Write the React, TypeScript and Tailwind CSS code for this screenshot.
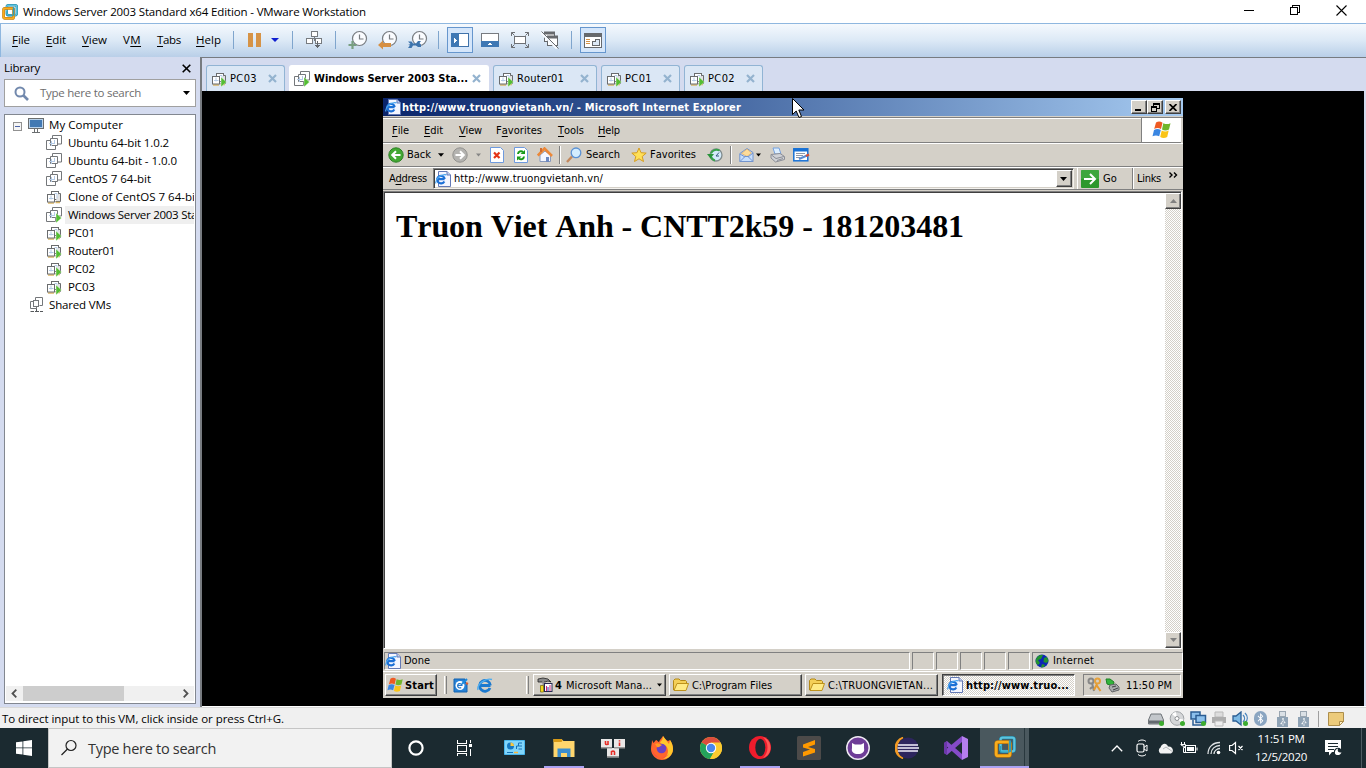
import React, { useLayoutEffect, useRef, useState } from "react";
import { FaBluetoothB, FaUsb } from "react-icons/fa";

const SEG = "font-['Open_Sans','Noto_Sans',sans-serif]";
const TAH = "font-['DejaVu_Sans_Condensed','DejaVu_Sans',sans-serif] [font-stretch:condensed] [font-kerning:none]";

/* One-line label whose letter spacing is adjusted so that the text spans `w` pixels. */
function Label({ t, w, u, className = "" }: { t: string; w: number; u?: number; className?: string }) {
  const ref = useRef<HTMLSpanElement>(null);
  const [ls, setLs] = useState(0);
  useLayoutEffect(() => {
    if (ref.current) setLs((w - ref.current.getBoundingClientRect().width) / t.length);
  }, [t, w]);
  return (
    <span ref={ref} className={"inline-block shrink-0 whitespace-pre " + className} style={{ letterSpacing: ls + "px" }}>
      {u === undefined ? t : (
        <>{t.slice(0, u)}<span className="underline underline-offset-2 decoration-1">{t[u]}</span>{t.slice(u + 1)}</>
      )}
    </span>
  );
}

type IconProps = { w?: number; h?: number; vb?: string; className?: string; crisp?: boolean; children: React.ReactNode };
function Svg({ w = 16, h = 16, vb, className = "", crisp, children }: IconProps) {
  return (
    <svg width={w} height={h} viewBox={vb ?? `0 0 ${w} ${h}`} fill="none" className={"shrink-0 block " + className} shapeRendering={crisp ? "crispEdges" : undefined}>
      {children}
    </svg>
  );
}

const VmwareLogo = ({ s = 16 }: { s?: number }) => (
  <Svg w={s} h={s} vb="0 0 20 20">
    <rect x="6" y="1.500" width="12.500" height="12.500" rx="2" stroke="#1d7f9c" strokeWidth="3" />
    <rect x="6" y="1.500" width="12.500" height="12.500" rx="2" stroke="#5cc3de" strokeWidth="2" />
    <rect x="2" y="5.500" width="12.500" height="12.500" rx="1.500" stroke="#b8730c" strokeWidth="3.400" />
    <rect x="2" y="5.500" width="12.500" height="12.500" rx="1.500" stroke="#f9ad1d" strokeWidth="2.400" />
    <path d="M6 9v5.500h8.500" stroke="#2c9dbd" strokeWidth="1" />
    <path d="M14.500 4v10.500" stroke="#2c9dbd" strokeWidth="2" />
  </Svg>
);

function VmIcon({ run, clone }: { run?: boolean; clone?: boolean }) {
  return clone ? (
    <Svg>
      <rect x="5.500" y="2.500" width="7" height="8" fill="#fff" stroke="#6a6c6e" />
      <path d="M12.500 4.500h2v8h-5" fill="#e4e4e4" stroke="#6a6c6e" />
      <path d="M2 14h6M9.500 13.500h4.500" stroke="#dcb868" strokeWidth="1.400" />
      <rect x="1.500" y="5.500" width="7" height="7.500" fill="#fff" stroke="#6a6c6e" />
      <path d="M5 6.500v4M3 9.500h4.500M8.500 4.500H11v5" stroke="#b5cbe6" />
      {run && <path d="M10 6v10l5.500-5z" fill="#54bd33" stroke="#fff" strokeWidth=".4" />}
    </Svg>
  ) : (
    <Svg>
      <path d="M6.500 4V.5h9v8.500H11" fill="#fff" stroke="#74777a" />
      <path d="M4.500 5.500h-4v9h9v-4" fill="#fff" stroke="#74777a" />
      <path d="M4.500 10.500v-7h7v7z" fill="#fff" stroke="#74777a" />
      <path d="M5.500 6v5M3 8.500h5M8.500 5v4" stroke="#b5cbe6" />
      {run && <path d="M10 6v10l5.500-5z" fill="#54bd33" stroke="#fff" strokeWidth=".4" />}
    </Svg>
  );
}

const IePage = () => (
  <Svg>
    <path d="M3.500.5h8.500l3.500 3.500v11.500h-12z" fill="#f4f6ff" stroke="#6379b5" />
    <path d="M12 .5V4h3.500" fill="#c5d1f0" stroke="#6379b5" />
    <path d="M2.200 8.200h7.500M9.300 10.400a3.800 3.800 0 1 1 .4-2.400" stroke="#1c70d6" strokeWidth="2.200" />
    <path d="M.8 12.500C0 8 6 2.500 11.500 3.800" stroke="#4aa5ee" strokeWidth="1.200" />
  </Svg>
);
const IeLogo = () => (
  <Svg>
    <path d="M3 8.500h10.500M13 11a5.400 5.400 0 1 1 .4-2.700" stroke="#1b79cf" strokeWidth="2.800" />
    <path d="M1 13C-.5 8 8 .5 15 2.500" stroke="#4fadee" strokeWidth="1.400" />
  </Svg>
);
const Flag = ({ w = 20, h = 18 }: { w?: number; h?: number }) => (
  <Svg w={w} h={h} vb="0 0 20 18">
    <path d="M4 1.500c2.500-1.400 4.500-1 6.500.2L9 8C6.800 6.800 4.500 6.800 2.200 8z" fill="#ee5a23" />
    <path d="M11.300 2.200c2.500 1.200 4.700 1.200 7.200 0L17 8.500c-2.400 1.200-4.800 1.200-7 0z" fill="#72b62b" />
    <path d="M2 9c2.300-1.200 4.600-1.200 6.800 0l-1.600 6.300C5 14.100 2.800 14.100.5 15.300z" fill="#3a86e2" />
    <path d="M9.700 9.500c2.300 1.200 4.600 1.200 7 0L15.200 16c-2.400 1.200-4.700 1.200-7 0z" fill="#fac417" />
  </Svg>
);
const Folder = () => (
  <Svg>
    <path d="M.5 13V3.500L2 2h4l1.500 1.500h5l1 1V7" fill="#f4cf57" stroke="#b48917" />
    <path d="M1 13.500 4 6.500h11.500L13 13.500z" fill="#ffea85" stroke="#bd911c" />
  </Svg>
);
const Down = ({ c = "#000", s = 7 }: { c?: string; s?: number }) => (
  <Svg w={s} h={4} vb="0 0 7 4"><path d="M0 0h7L3.500 4z" fill={c} /></Svg>
);

/* ---------- host toolbar ---------- */
const Clock = ({ kind }: { kind: "add" | "revert" | "manage" }) => (
  <Svg w={20} h={20}>
    <circle cx="11.500" cy="8.500" r="7" fill="#fafcff" stroke="#777b80" strokeWidth="1.200" />
    <path d="M11.500 4.500v4.500h4" stroke="#777b80" strokeWidth="1.200" />
    {kind === "add" && <path d="M4.500 11v8M.5 15h8" stroke="#799f82" strokeWidth="2.200" />}
    {kind === "revert" && <path d="M0 15l5-4.500V13h8v4H5v2.500z" fill="#d68f42" />}
    {kind === "manage" && <path d="M0 11.500h3.500l1.500 2h3l2-2.500h3L11.500 13l1.500 1.500v2.500h-3l-2-1.500H5l-1.500 2.500H0l1.500-2v-1H0l2.500-1z" fill="#3e74ad" />}
  </Svg>
);
const Sep = () => <span className="w-px h-[18px] bg-[#7fa5cd] shrink-0" />;

function MenuBar() {
  return (
    <div className={"h-[34px] shrink-0 border-t border-l border-[#8fb7df] bg-linear-to-b from-[#f5f9fd] via-[#dce9f6] to-[#b9cfe8] flex items-center text-[11.5px] text-black pb-px " + SEG}>
      <div className="w-[34px] pl-[11px]"><Label t="File" w={18} u={0} /></div>
      <div className="w-9 pl-[11px]"><Label t="Edit" w={20} u={0} /></div>
      <div className="w-[41px] pl-[11px]"><Label t="View" w={25} u={0} /></div>
      <div className="w-[34px] pl-[11px]"><Label t="VM" w={18} u={1} /></div>
      <div className="w-[39px] pl-[11px]"><Label t="Tabs" w={24} u={0} /></div>
      <div className="w-12 pl-[11px]"><Label t="Help" w={25} u={0} /></div>
      <Sep />
      <div className="w-[58px] pl-[14px] flex items-center gap-[9px]">
        <Svg w={14} h={14} crisp><path d="M0 0h5v14H0zM8 0h5v14H8z" fill="#d69346" /></Svg>
        <Svg w={8} h={4}><path d="M0 0h8L4 4z" fill="#0f1ed0" /></Svg>
      </div>
      <Sep />
      <div className="w-[42px] pl-[13px]">
        <Svg w={17} h={18} crisp>
          <path d="M8.500 5v5M4 10V7h9v3" stroke="#777b80" />
          <rect x="5.500" y=".5" width="6" height="5" fill="#fff" stroke="#777b80" />
          <rect x=".5" y="7.500" width="6" height="5" fill="#fff" stroke="#777b80" />
          <rect x="9.500" y="7.500" width="6" height="5" fill="#fff" stroke="#777b80" />
          <path d="M11.500 10v7M9 14.500h5M10 15.500h3" stroke="#62666b" />
        </Svg>
      </div>
      <Sep />
      <div className="w-[102px] pl-3 flex gap-[10px]"><Clock kind="add" /><Clock kind="revert" /><Clock kind="manage" /></div>
      <Sep />
      <div className="w-[132px] pl-[8px] flex items-center">
        <span className="size-[26px] border border-[#6696cd] bg-[#d5e6fa] flex items-center justify-center">
          <Svg w={18} h={14} crisp><rect x=".5" y=".5" width="17" height="13" fill="#fff" stroke="#3f72aa" /><path d="M0 0h8v14H0z" fill="#3f78b4" /><path d="M3 5v5l3-2.500z" fill="#fff" /></Svg>
        </span>
        <Svg w={18} h={14} crisp className="ml-2"><rect x=".5" y=".5" width="17" height="13" fill="#fff" stroke="#777b80" /><path d="M0 8h18v6H0z" fill="#3f78b4" /><path d="M6 12h6l-3-2z" fill="#fff" /></Svg>
        <Svg w={18} h={16} className="ml-3"><rect x="3.500" y="4.500" width="11" height="7" fill="#fff" stroke="#6d7074" /><path d="M.5 4V.5H4M.5.5l3 3M14 .5h3.500V4M17.500.5l-3 3M.5 12v3.500H4M.5 15.500l3-3M14 15.500h3.500V12M17.500 15.500l-3-3" stroke="#6d7074" /></Svg>
        <Svg w={18} h={18} className="ml-3">
          <rect x="3.500" y="1.500" width="10" height="9" fill="#fff" stroke="#66696d" /><path d="M3 2h11" stroke="#66696d" strokeWidth="3" />
          <rect x="6.500" y="5.500" width="10" height="9" fill="#fff" stroke="#66696d" /><path d="M6 6h11" stroke="#66696d" strokeWidth="3" />
          <path d="M0 1.500l16 16" stroke="#f4f8fd" strokeWidth="2.500" /><path d="M.5.5l17 17" stroke="#66696d" />
        </Svg>
      </div>
      <Sep />
      <span className="ml-2 size-[26px] border border-[#6696cd] bg-[#d5e6fa] flex items-center justify-center">
        <Svg w={18} h={15} crisp><rect x=".5" y=".5" width="17" height="14" fill="#fff" stroke="#66696d" /><path d="M0 0h18v4H0z" fill="#66696d" /><path d="M2 6.500h4M2 8.500h4M2 10.500h4" stroke="#d69346" /><path d="M8.500 12.500v-4h3v-2h4v6z" fill="#dce9f7" stroke="#66696d" /></Svg>
      </span>
    </div>
  );
}

/* ---------- library ---------- */
const vms = [
  { n: "Ubuntu 64-bit 1.0.2", w: 101 },
  { n: "Ubuntu 64-bit - 1.0.0", w: 109 },
  { n: "CentOS 7 64-bit", w: 83 },
  { n: "Clone of CentOS 7 64-bit", w: 131, clone: true },
  { n: "Windows Server 2003 Standard", w: 160, run: true, sel: true },
  { n: "PC01", w: 27, run: true, clone: true },
  { n: "Router01", w: 47, run: true, clone: true },
  { n: "PC02", w: 27, run: true, clone: true },
  { n: "PC03", w: 27, run: true, clone: true },
];

function Library() {
  return (
    <aside className={"w-[200px] shrink-0 bg-[#d4dbef] flex flex-col px-1 pb-[3px] text-[11.5px] text-black " + SEG}>
      <div className="h-[22px] flex items-center justify-between pr-[5px]">
        <Label t="Library" w={36} />
        <Svg w={9} h={9}><path d="M.7.7l7.600 7.600M8.300.7.7 8.300" stroke="#000" strokeWidth="1.600" /></Svg>
      </div>
      <div className="h-7 w-48 shrink-0 bg-white border border-[#a0a0a0] flex items-center pl-[9px] pr-[5px]">
        <Svg w={15} h={15}><circle cx="6" cy="6" r="4.500" stroke="#7289ad" strokeWidth="2" /><path d="M9 9l5 5" stroke="#7289ad" strokeWidth="2.600" /></Svg>
        <span className="ml-[11px] text-[#6d6d6d]"><Label t="Type here to search" w={101} /></span>
        <span className="ml-auto"><Down /></span>
      </div>
      <div className="mt-[7px] w-48 flex-1 min-h-0 bg-white border border-[#828790] flex flex-col overflow-hidden p-px">
        <div className="h-[18px] flex items-center pl-[7px]">
          <Svg w={9} h={9} crisp className="mt-[2px]"><rect x=".5" y=".5" width="8" height="8" fill="#f5f5f5" stroke="#919191" /><path d="M2 4.500h5" stroke="#4b63a7" /></Svg>
          <Svg w={17} h={15} crisp className="ml-[6px]"><rect x=".5" y=".5" width="15" height="10" fill="#4279b3" stroke="#6b6e70" /><path d="M1.500 1.500h13v8h-13z" stroke="#b9d2eb" /><path d="M4 14.500h8M6.500 11v3M9.500 11v3" stroke="#6b6e70" /></Svg>
          <span className="ml-1"><Label t="My Computer" w={74} /></span>
        </div>
        {vms.map((v) => (
          <div key={v.n} className="h-[18px] flex items-center pl-10 shrink-0">
            <VmIcon run={v.run} clone={v.clone} />
            <span className={"ml-[3px] h-[18px] pl-[3px] flex-1 overflow-hidden flex items-center " + (v.sel ? "bg-[#efefef]" : "")}><Label t={v.n} w={v.w} /></span>
          </div>
        ))}
        <div className="h-[18px] flex items-center pl-[23px]">
          <Svg><path d="M6.500 3V.5h7v8h-3" fill="#fff" stroke="#74777a" /><path d="M4.500 4.500H1.500v7h6v-2" fill="#fff" stroke="#74777a" /><rect x="4.500" y="3.500" width="5" height="6" fill="#fff" stroke="#74777a" /><path d="M7.500 11.500v3M1.500 14.500H5M6 14.500h4M11 14.500h3" stroke="#55585b" /></Svg>
          <span className="ml-[4px]"><Label t="Shared VMs" w={62} /></span>
        </div>
        <div className="mt-auto h-[15px] mb-px shrink-0 bg-[#f0f0f0] flex items-center justify-between px-[5px]">
          <Svg w={6} h={9}><path d="M5.300.7 1.500 4.500l3.800 3.800" stroke="#505050" strokeWidth="1.800" /></Svg>
          <span className="h-[15px] w-[101px] bg-[#cdcdcd] mr-auto ml-[6px]" />
          <Svg w={6} h={9}><path d="M.7.7l3.800 3.800L.7 8.300" stroke="#505050" strokeWidth="1.800" /></Svg>
        </div>
      </div>
    </aside>
  );
}

/* ---------- VM tabs ---------- */
function Tab({ t, w, active, clone = true, className }: { t: string; w: number; active?: boolean; clone?: boolean; className: string }) {
  return (
    <div className={"h-[26px] flex items-center rounded-t-[3px] border border-b-0 pl-1 pr-[7px] " + className + (active ? " bg-white border-white font-bold" : " bg-[#dbe7f5] border-[#91b4d4]")}>
      <VmIcon run clone={clone} />
      <span className={"pt-px " + (active ? "ml-1" : "ml-[3px]")}><Label t={t} w={w} /></span>
      <Svg w={9} h={9} className="ml-auto"><path d="M1 1l7 7M8 1 1 8" stroke="#94b3cf" strokeWidth="2.200" /></Svg>
    </div>
  );
}
function Tabs() {
  return (
    <div className={"h-[33px] shrink-0 bg-[#d4dbef] flex items-end text-[11px] pl-1 " + TAH}>
      <Tab t="PC03" w={27} className="w-[79px]" />
      <Tab t="Windows Server 2003 Sta..." w={154} active clone={false} className="w-[200px] ml-1" />
      <Tab t="Router01" w={47} className="w-[104px] ml-1" />
      <Tab t="PC01" w={27} className="w-[79px] ml-1" />
      <Tab t="PC02" w={27} className="w-[79px] ml-1" />
    </div>
  );
}

/* ---------- guest desktop ---------- */
const RAISED = "bg-[#d4d0c8] border border-t-white border-l-white border-r-[#404040] border-b-[#404040] shadow-[inset_-1px_-1px_0_#808080]";
const CHECK = "bg-[repeating-conic-gradient(#ffffff_0_25%,#d4d0c8_0_50%)] bg-[length:2px_2px]";
const GSep = () => <span className="block w-[2px] h-[18px] bg-[#808080] border-r border-white shrink-0" />;

const CapBtn = ({ children, className = "" }: { children: React.ReactNode; className?: string }) => (
  <span className={"w-4 h-[14px] flex items-center justify-center " + RAISED + " " + className}>{children}</span>
);

function Round({ dir, c1, c2 }: { dir: "l" | "r"; c1: string; c2: string }) {
  return (
    <Svg>
      <circle cx="8" cy="8" r="7.200" fill={c1} stroke={c2} />
      <path d={dir === "l" ? "M12.500 8H5M8 4.200 4.200 8 8 11.800" : "M3.500 8H11M8 4.200 11.800 8 8 11.800"} stroke="#fff" strokeWidth="2" />
    </Svg>
  );
}

function GuestTitle() {
  return (
    <div className="h-[18px] shrink-0 bg-linear-to-r from-[#0a246a] to-[#a6caf0] flex items-center pl-[2px] pr-[2px] text-white font-bold">
      <IePage />
      <span className="ml-px pt-[2px]"><Label t="http://www.truongvietanh.vn/ - Microsoft Internet Explorer" w={339} /></span>
      <span className="ml-auto" />
      <CapBtn><Svg w={10} h={8} crisp><path d="M1 6h6v2H1z" fill="#000" /></Svg></CapBtn>
      <CapBtn><Svg w={9} h={9} crisp><path d="M2.500 3V.5h6v5H6M2 1.500h7M.5 3.500h5v5h-5zM0 4.500h6" stroke="#000" /></Svg></CapBtn>
      <CapBtn className="ml-[2px]"><Svg w={8} h={7}><path d="M.5 0l7 7M7.500 0l-7 7" stroke="#000" strokeWidth="1.700" /></Svg></CapBtn>
    </div>
  );
}
function GuestMenu() {
  return (
    <div className="h-[26px] shrink-0 mt-px border-t border-[#808080] flex">
      <div className="flex-1 border-t border-b border-t-white border-b-[#808080] flex items-center pl-[9px]">
        <div className="w-8"><Label t="File" w={17} u={0} /></div>
        <div className="w-[35px]"><Label t="Edit" w={19} u={0} /></div>
        <div className="w-[37px]"><Label t="View" w={23} u={0} /></div>
        <div className="w-[62px]"><Label t="Favorites" w={46} u={1} /></div>
        <div className="w-10"><Label t="Tools" w={26} u={0} /></div>
        <Label t="Help" w={22} u={0} />
      </div>
      <div className="w-[40px] border-l border-b border-[#808080] bg-white flex items-center justify-center mr-[2px]"><Flag /></div>
    </div>
  );
}
function GuestTools() {
  return (
    <div className="h-[23px] shrink-0 border-t border-white flex items-center pl-[5px]">
      <Round dir="l" c1="#42a832" c2="#2d8126" />
      <span className="w-[34px] pl-[3px]"><Label t="Back" w={24} /></span>
      <Down s={6} />
      <span className="ml-[8px]"><Round dir="r" c1="#b4b3b0" c2="#92918e" /></span>
      <span className="ml-[8px]"><Down s={5} c="#858585" /></span>
      <Svg className="ml-[9px]" w={14}><path d="M.5.5h10l3 3v12H.5z" fill="#fff" stroke="#6e9ade" /><path d="M4 5.500l5.500 5.500M9.500 5.500 4 11" stroke="#e43519" strokeWidth="2.200" /></Svg>
      <Svg className="ml-[10px]" w={14}><path d="M.5.5h10l3 3v12H.5z" fill="#fff" stroke="#6e9ade" /><path d="M4 7a3 3 0 0 1 5-2M10 9.500a3 3 0 0 1-5 2" stroke="#189a18" strokeWidth="2" /><path d="M6.500 7H11V3zM7.500 9.500H3v4z" fill="#189a18" /></Svg>
      <Svg className="ml-[9px]"><path d="M3 8v6.500h10.500V8L8 4z" fill="#f5f7ff" stroke="#8698bd" /><path d="M.8 8.500 7.500 1.500 15 9" stroke="#ec8838" strokeWidth="2.600" /><path d="M9 10h3v5H9z" fill="#6c88c0" /><path d="M3 1h2v4H3z" fill="#ce6d34" /></Svg>
      <span className="ml-[6px]"><GSep /></span>
      <Svg className="ml-[5px]"><path d="M6 9.500 1 15" stroke="#c3885c" strokeWidth="2.400" /><circle cx="10" cy="5.800" r="4.800" fill="#d3edff" stroke="#5b91d4" strokeWidth="1.300" /></Svg>
      <span className="ml-[4px]"><Label t="Search" w={34} /></span>
      <Svg className="ml-[11px]"><path d="M8 1l2 4.700 5.200.4-4 3.400 1.300 5L8 11.800 3.500 14.500l1.300-5-4-3.400L6 5.700z" fill="#ffe058" stroke="#d69d20" /></Svg>
      <span className="ml-[3px]"><Label t="Favorites" w={46} /></span>
      <Svg className="ml-[11px]"><circle cx="9" cy="8" r="6" fill="#d3eafa" stroke="#7f8b8c" strokeWidth="1.300" /><path d="M12.500 3.500A6 6 0 0 0 4 6.500M4 10a6 6 0 0 0 4 3.500" stroke="#37a24a" strokeWidth="2" /><path d="M0 7h7l-3.500 4.500z" fill="#289439" /><path d="M9 9l3-3.500M9 9h3" stroke="#35597d" /></Svg>
      <span className="ml-[7px]"><GSep /></span>
      <Svg className="ml-[7px]"><path d="M.8 6.500 8 1.500l6 4v9H.8z" fill="#c7dffd" stroke="#7294ce" /><path d="M2.500 6.500 8 2l4.500 4L8 9.500z" fill="#fddc9a" stroke="#dba85b" strokeWidth=".7" /><path d="M1 14.500 6 9.500h3l5 5M1 7l5 3M14 6 9 10" stroke="#7294ce" /></Svg>
      <span className="ml-px"><Down s={5} /></span>
      <Svg className="ml-[9px]"><path d="M3 1h6l2 6H5z" fill="#dceeff" stroke="#76a2df" /><path d="M1 7.500l9-1 4.500 3v3L5.500 15 1 11z" fill="#d0d2d7" stroke="#8b8e96" /><path d="M1.500 8 6 11.500l8-2M7 13.500l6-2" stroke="#8b8e96" /></Svg>
      <Svg className="ml-[7px]" w={17}><rect x=".8" y="1.800" width="14" height="12" fill="#fff" stroke="#1871d5" strokeWidth="1.500" /><path d="M.5 3h14.500" stroke="#1871d5" strokeWidth="3" /><path d="M3 6.500h9M3 8.500h7M3 10.500h4" stroke="#8c97a8" /><path d="M6 12l8-3.500" stroke="#598cd5" strokeWidth="2" /><path d="M13 9l3-1.500" stroke="#d64f35" strokeWidth="2.400" /></Svg>
    </div>
  );
}
function GuestAddress() {
  return (
    <div className="h-[25px] shrink-0 border-t border-[#808080]">
      <div className="h-[23px] border-t border-b border-t-white border-b-[#808080] flex items-center pl-[6px]">
        <Label t="Address" w={38} u={1} />
        <div className="ml-[6px] w-[641px] h-[21px] bg-white border border-t-[#808080] border-l-[#808080] border-b-[#f4f2ee] border-r-[#f4f2ee] shadow-[inset_1px_1px_0_#404040,inset_-1px_-1px_0_#d4d0c8] flex items-center pl-[1px] pr-px">
          <IePage />
          <span className="ml-[3px] pt-px"><Label t="http://www.truongvietanh.vn/" w={149} /></span>
          <span className={"ml-auto w-4 h-[17px] flex items-center justify-center " + RAISED}><Down /></span>
        </div>
        <span className="ml-[3px] h-[21px] w-px bg-white" />
        <Svg w={18} h={18} className="ml-[3px]"><rect width="18" height="18" rx="1" fill="#2d982c" /><path d="M0 0h18v9H0z" fill="#50b44d" opacity=".5" /><path d="M3 9h11M9 4l5 5-5 5" stroke="#fff" strokeWidth="2" /></Svg>
        <span className="w-[33px] pl-1"><Label t="Go" w={14} /></span>
        <span className="h-[21px] w-[2px] bg-[#808080] border-r border-white" />
        <span className="ml-[3px]"><Label t="Links" w={24} /></span>
        <Svg w={9} h={6} className="ml-[8px] mb-[7px]"><path d="M.5.5 3 3 .5 5.500M5 .5 7.500 3 5 5.500" stroke="#000" strokeWidth="1.400" /></Svg>
      </div>
    </div>
  );
}
function GuestBody() {
  return (
    <div className="flex-1 min-h-0 mr-px border border-t-[#808080] border-l-[#808080] border-r-white border-b-white bg-white flex">
      <div className="flex-1 border-t border-l border-[#404040] pt-[15px] pl-[11px]">
        <h1 className="font-['Liberation_Serif',serif] font-bold text-[32px] leading-[37px] text-black"><Label t="Truon Viet Anh - CNTT2k59 - 181203481" w={568} /></h1>
      </div>
      <div className={"w-4 border-t border-[#404040] flex flex-col justify-between " + CHECK}>
        <span className={"h-4 flex items-center justify-center " + RAISED}><Svg w={7} h={4}><path d="M0 4h7L3.500 0z" fill="#808080" /></Svg></span>
        <span className={"h-4 flex items-center justify-center " + RAISED}><Down c="#808080" /></span>
      </div>
    </div>
  );
}
const PANE = "h-[18px] border border-t-[#808080] border-l-[#808080] border-r-white border-b-white flex items-center";
function GuestStatus() {
  return (
    <div className="h-5 shrink-0 mt-[3px] border-b border-white flex items-start gap-[2px] pl-px">
      <div className={"w-[526px] " + PANE}><IePage /><span className="ml-[3px]"><Label t="Done" w={26} /></span></div>
      {[0, 1, 2, 3, 4].map((i) => <div key={i} className={"w-[22px] " + PANE} />)}
      <div className={"flex-1 pl-[2px] " + PANE}>
        <Svg w={14} h={14}><circle cx="7" cy="7" r="6.500" fill="#0d28b5" /><path d="M1 5C3 1 5 1 8 1L6 5 3 6l2 3-2 2C1 10 0 7 1 5M9 4l3-1 1.500 4-2 2-3-1zM7 10l3 1-1 2-3 .5z" fill="#22932d" /></Svg>
        <span className="ml-[4px]"><Label t="Internet" w={41} /></span>
      </div>
    </div>
  );
}
const TaskBtn = ({ children, className = "" }: { children: React.ReactNode; className?: string }) => (
  <div className={"w-[133px] h-[22px] flex items-center pl-[3px] " + RAISED + " " + className}>{children}</div>
);
function GuestTaskbar() {
  return (
    <div className="h-[26px] shrink-0 flex items-center pl-[2px] pr-[2px]">
      <div className={"w-[52px] h-[22px] flex items-center pl-px font-bold " + RAISED}><Flag w={17} h={16} /><span className="ml-px pt-px"><Label t="Start" w={29} /></span></div>
      <span className="ml-[7px] w-[3px] h-[18px] border-l border-white border-r border-r-[#808080]" />
      <Svg className="ml-[6px]"><path d="M1 2h11v3l2 2v8H1z" fill="#2681d6" stroke="#1563ae" /><circle cx="7" cy="8.500" r="4.500" fill="#fff" /><path d="M5 8.500h4a2.200 2.200 0 1 0-.8 2" stroke="#2478cb" strokeWidth="1.200" /><path d="M9 7l5-5" stroke="#1b8ade" strokeWidth="2" /><path d="M13 6l2 1" stroke="#dd5e32" strokeWidth="2" /></Svg>
      <span className="ml-[8px]"><IeLogo /></span>
      <span className="ml-[33px] w-[3px] h-[18px] border-l border-white border-r border-r-[#808080]" />
      <TaskBtn className="ml-[4px]">
        <Svg><path d="M1 2l5-1 5 1 3 3-3-1-3 1H1z" fill="#8a8a8a" stroke="#222" strokeWidth=".8" /><path d="M6 4l1 6" stroke="#8d8d8d" strokeWidth="2" /><path d="M3.500 8.500h3v6.500h-3z" fill="#f2dc1a" stroke="#705f10" strokeWidth=".7" /><rect x="7.500" y="6.500" width="7.500" height="8" fill="#fff" stroke="#26264f" /><path d="M9.500 9v5M13 8v6" stroke="#d72578" /><path d="M11 10v4" stroke="#2d42a8" /></Svg>
        <b className="ml-[2px] pt-px"><Label t="4" w={7} /></b><span className="ml-1 pt-px"><Label t="Microsoft Mana..." w={86} /></span>
        <span className="ml-auto mr-[3px]"><Down s={5} /></span>
      </TaskBtn>
      <TaskBtn className="ml-[3px]"><Folder /><span className="ml-[3px] pt-px"><Label t="C:\Program Files" w={80} /></span></TaskBtn>
      <TaskBtn className="ml-[3px]"><Folder /><span className="ml-[3px] pt-px"><Label t="C:\TRUONGVIETAN..." w={105} /></span></TaskBtn>
      <div className={"ml-[4px] w-[133px] h-[22px] flex items-center pl-1 font-bold border border-t-[#404040] border-l-[#404040] border-r-white border-b-white shadow-[inset_1px_1px_0_#808080] " + CHECK}>
        <IePage /><span className="ml-[3px] pt-[2px]"><Label t="http://www.truo..." w={103} /></span>
      </div>
      <div className="ml-auto w-[98px] h-[22px] border border-t-[#808080] border-l-[#808080] border-r-white border-b-white flex items-center pl-[3px]">
        <Svg w={15}><circle cx="4" cy="4" r="2.500" stroke="#878787" strokeWidth="2" /><path d="M5 6l2 8M5 10l-2 2" stroke="#878787" strokeWidth="2" /><circle cx="10.500" cy="4" r="2.500" stroke="#e5a13c" strokeWidth="2" /><path d="M10 7l-3 6M9.500 8l4 6" stroke="#e59a30" strokeWidth="2" /></Svg>
        <Svg w={15} className="ml-[3px]"><path d="M1 2h4l4 3-1 4-6-2z" fill="#32b43b" stroke="#1e8125" /><path d="M5 8l6-1 3 3v3l-7 2-3-4z" fill="#a9abad" stroke="#626466" /><path d="M7 10l4-1M8 13l5-2" stroke="#3e4143" /></Svg>
        <span className="ml-[6px] pt-px"><Label t="11:50 PM" w={46} /></span>
      </div>
    </div>
  );
}
function Guest() {
  return (
    <div className={"w-[800px] h-[600px] bg-[#d4d0c8] flex flex-col text-[11px] leading-[14px] text-black overflow-hidden " + TAH}>
      <GuestTitle />
      <GuestMenu />
      <GuestTools />
      <GuestAddress />
      <GuestBody />
      <GuestStatus />
      <GuestTaskbar />
    </div>
  );
}

/* ---------- host status bar ---------- */
const Dot = ({ x = 13.5 }: { x?: number }) => <circle cx={x} cy="12.500" r="2.500" fill="#3dac2f" />;
const Usb = () => (
  <span className="w-[11px] h-4 flex flex-col items-center shrink-0">
    <span className="w-[7px] h-[6px] border border-[#9aa6b1] bg-[#dbe1e6]" />
    <span className="w-[11px] h-[10px] bg-[#8fa3b5] flex items-center justify-center text-white"><FaUsb size={8} className="rotate-90" /></span>
  </span>
);
function HostStatus() {
  return (
    <div className={"h-[21px] shrink-0 bg-[#f0f0f0] flex items-center pl-[2px] pr-[22px] pt-px text-[11.5px] text-black border-t border-[#d9d9d9] " + SEG}>
      <Label t="To direct input to this VM, click inside or press Ctrl+G." w={282} />
      <span className="ml-auto flex items-center">
        <Svg w={17}><path d="M3 3h10l2.500 6v4H.5V9z" fill="#c3c7cb" stroke="#6f7478" /><path d="M1 9.500h14v3H1z" fill="#63696f" /><Dot /></Svg>
        <Svg w={17} className="ml-1"><circle cx="8" cy="7.500" r="6.800" fill="#d5d7d9" stroke="#9ea2a5" /><path d="M8 7.500 3 3a7 7 0 0 1 4-2zM8 7.500l5 5 1.500-4z" fill="#fff" /><circle cx="8" cy="7.500" r="2" fill="#fff" stroke="#8d9194" /><Dot /></Svg>
        <Svg w={17} className="ml-1"><rect x="1" y="1" width="9" height="7" fill="#8cc0ec" stroke="#2a5c92" strokeWidth="1.500" /><rect x="6" y="4.500" width="9.500" height="7" fill="#8cc0ec" stroke="#2a5c92" strokeWidth="1.500" /><path d="M3 9v5h5M8 14h5" stroke="#2a5c92" strokeWidth="1.500" /><Dot /></Svg>
        <Svg w={17} className="ml-1"><path d="M4 1h8v5H4z" fill="#ddd" stroke="#b9b9b9" /><path d="M1 6h14v6H1z" fill="#adadad" /><path d="M4 10h8v5H4z" fill="#eee" stroke="#b9b9b9" /></Svg>
        <Svg w={17} className="ml-1"><path d="M1 5h3l5-4v13l-5-4H1z" fill="#7cb9e5" stroke="#2b5e94" strokeWidth="1.300" /><path d="M11 4c2 2 2 5 0 7M13 2c3 3 3 7 0 10" stroke="#4984bd" strokeWidth="1.300" /><Dot /></Svg>
        <span className="ml-[5px] w-[13px] h-[15px] rounded-full bg-[#8aa5c1] flex items-center justify-center text-white"><FaBluetoothB size={11} /></span>
        <span className="ml-[10px]"><Usb /></span>
        <span className="ml-[10px]"><Usb /></span>
        <span className="ml-[9px] w-px h-4 bg-[#9f9f9f]" />
        <Svg className="ml-[9px]"><path d="M.5 1.500h15v9l-4 4H.5z" fill="#eccb7b" stroke="#ad8e4b" /><path d="M11.500 14.500v-4h4z" fill="#fff2cc" stroke="#ad8e4b" /></Svg>
      </span>
    </div>
  );
}

/* ---------- host taskbar ---------- */
const Slot = ({ line, children, className = "w-[49px]" }: { line?: boolean; children: React.ReactNode; className?: string }) => (
  <div className={"h-10 shrink-0 flex flex-col items-center " + className}>
    <span className="h-[38px] pt-px flex items-center">{children}</span>
    {line && <span className="w-10 h-[2px] bg-[#aaa2f2]" />}
  </div>
);
function HostTaskbar() {
  return (
    <div className={"h-10 shrink-0 bg-[#1b2a30] flex text-white overflow-hidden " + SEG}>
      <div className="w-12 flex items-center justify-center"><Svg><path d="M0 2.300 6.500 1.400v6.100H0zM7.300 1.300 16 0v7.500H7.300zM0 8.300h6.500v6.300L0 13.700zM7.300 8.300H16V16l-8.700-1.300z" fill="#fff" /></Svg></div>
      <div className="w-[344px] bg-[#f2f2f2] border border-[#c5c5c5] flex items-center pl-[11px] text-[#333]">
        <Svg w={18} h={18}><circle cx="11" cy="6.500" r="5" stroke="#222" strokeWidth="1.200" /><path d="M7.500 10 1.500 16" stroke="#222" strokeWidth="1.300" /></Svg>
        <span className="ml-[10px] pt-px text-[14.5px]"><Label t="Type here to search" w={128} /></span>
      </div>
      <Slot className="w-[48px]"><Svg><circle cx="8" cy="8" r="6.600" stroke="#fff" strokeWidth="2.200" /></Svg></Slot>
      <Slot className="w-[48px]"><Svg crisp w={17}><path d="M1.500 0v3.500h9V0M1.500 16v-2.500h9V16M1.500 5.500h9v6h-9zM14.500 0v3M14.500 9v7" stroke="#fff" /><path d="M13 4h3v3h-3z" fill="#fff" /></Svg></Slot>
      <Slot className="w-[51px] pl-[2px]"><Svg w={21} h={15}><rect width="21" height="15" rx=".8" fill="#4ab6ed" /><rect x="1" y="1" width="19" height="13" fill="#81d5fb" /><circle cx="6.500" cy="6" r="3.500" fill="#1578c2" /><path d="M6.500 6V2.500A3.500 3.500 0 0 1 10 6z" fill="#f8c640" /><path d="M12.500 9V6h2v-3H18M14.500 6H18M14.500 9H18M3 12.500h6" stroke="#1571b6" /><path d="M10 12.500h4" stroke="#f8b63c" strokeWidth="1.500" /></Svg></Slot>
      <Slot line><Svg w={22} h={18}><path d="M.5 0h8l2 2h11v16H.5z" fill="#ffd66d" /><path d="M.5 0h8l1 1.500-1 1.500h-8z" fill="#d99a15" /><path d="M4.500 9.500h13V18h-3.500v-4H8v4H4.500z" fill="#3b8ed0" /></Svg></Slot>
      <Slot>
        <Svg w={24} h={20}><path d="M0 1h11v8H0zM13 1h11v8H13zM6 10h12v9H6z" fill="#e9e7e7" /><path d="M0 9h11v1.500H0zM13 9h11v1.500H13zM6 18h12v1.800H6z" fill="#979797" /><path d="M4.500 3v2.800c0 1 2.500 1 2.500 0V3M7 3v4M18.500 4.500V8M18.500 2.200v1.300M10.500 17v-4M10.500 14c0-1.200 3-1.200 3 0v3" stroke="#e52c26" strokeWidth="1.600" /></Svg>
      </Slot>
      <Slot><Svg w={24} h={24}><path d="M2 4l1.500 3L6 4c1 0 2 2 3 2 1-3 3-4 4-6 2 3 3 4 5 5l2-1c2 3 3 6 3 9 0 6-5 11-11 11S1 19 1 13c0-4 1-5 1-9z" fill="#ff662d" /><path d="M13 0c2 3 4 5 6 8l1-4c2 3 3 6 3 9 0 6-5 10-10 10 6-3 6-10 3-13-2-2-5-1-6-4 2-1 3-4 3-6z" fill="#ffc72b" /><path d="M2 14c1 7 10 11 17 4-4 6-14 5-17-4z" fill="#f52b66" /><circle cx="11.500" cy="12.500" r="4.800" fill="#6b42c2" /><path d="M5 8c3-2 5 0 7 1-2 1-3 3-5 2z" fill="#ff9b22" /></Svg></Slot>
      <Slot><Svg w={22} h={22}><circle cx="11" cy="11" r="11" fill="#f8c92f" /><path d="M11 11 1.500 5.500A11 11 0 0 1 20.500 5.500z" fill="#dd4d3d" /><path d="M1.500 5.500A11 11 0 0 0 10 22l5-9z" fill="#24a35b" /><path d="M20.500 5.500H11v6l4 2L10 22A11 11 0 0 0 20.500 5.500z" fill="#fbca30" /><circle cx="11" cy="11" r="5.200" fill="#fff" /><circle cx="11" cy="11" r="4.200" fill="#4886ed" /></Svg></Slot>
      <Slot line><Svg w={22} h={23}><ellipse cx="11" cy="11.500" rx="11" ry="11.500" fill="#ef1c2c" /><path d="M14 1c10 3 10 18 0 21 6-5 6-16 0-21z" fill="#ff5a56" /><ellipse cx="11.300" cy="11.500" rx="5" ry="8.800" fill="#1d2a30" /></Svg></Slot>
      <Slot><Svg w={24} h={24}><rect width="24" height="24" rx="1.500" fill="#4c4a49" /><path d="M6 8.500 18 4v4.500L11 11l7 2v3.500L6 20.500V16l7-2.500-7-2z" fill="#ff9900" /></Svg></Slot>
      <Slot><Svg w={24} h={24}><circle cx="12" cy="12" r="11.200" fill="#6e3d97" stroke="#eee9f2" strokeWidth="1.500" /><path d="M6 7l3 1.500h6L18 7v5c1 4-2 6-6 6s-7-2-6-6z" fill="#fff" /></Svg></Slot>
      <Slot><Svg w={24} h={22}><path d="M8 .5A11 11 0 0 0 8 21.500 12 12 0 0 1 8 .5z" fill="#f49a24" stroke="#f49a24" strokeWidth="1.500" /><circle cx="13" cy="11" r="10.500" fill="#2d255d" /><path d="M3 8h20M2.500 11h21.500M3 14h20" stroke="#f4f1fb" strokeWidth="1.700" /></Svg></Slot>
      <Slot><Svg w={24} h={24}><path d="M18 0l6 3v18l-6 3z" fill="#b57eee" /><path d="M0 7l3-2 15 13v6L0 8z" fill="#854bc8" /><path d="M0 17l3 2L18 6V0L0 15z" fill="#854bc8" /><path d="M0 7l3-2v14l-3-2z" fill="#6c38aa" /></Svg></Slot>
      <div className="w-[49px] h-10 flex bg-[#4a585e] border-b-2 border-[#aaa2f2]"><span className="w-[45px] flex items-center justify-center border-r border-[#29383e] pl-[5px]"><VmwareLogo s={22} /></span></div>
      <div className="ml-auto flex items-center">
        <Svg w={12} h={7}><path d="M.8 6.200 6 1l5.200 5.200" stroke="#fff" strokeWidth="1.300" /></Svg>
        <Svg w={12} h={18} className="ml-[13px]"><path d="M2 2.500C4 .5 8 .5 10 2.500M2 15.500c2 2 6 2 8 0" stroke="#fff" /><rect x="1" y="5" width="7" height="8" rx="1.500" stroke="#fff" strokeWidth="1.200" /><path d="M8 8.500 11 6v6L8 10" stroke="#fff" /></Svg>
        <Svg w={17} h={11} className="ml-[9px]"><path d="M3.500 10.500a3.500 3.500 0 0 1 0-6C5 0 9.500-.5 11 3.500c5-.5 6.500 5 3 7z" fill="#f2f2f2" /><path d="M6 6l3-2 7 5" stroke="#b4b8ba" /></Svg>
        <Svg w={18} h={14} className="ml-[6px]"><rect x="5.500" y="4.500" width="10" height="7" stroke="#fff" /><path d="M7 6h7v4H7z" fill="#fff" /><path d="M17 6.500v3M1.500 1v3M4.500 1v3M.5 3.500h5v3h-2v5H6M1 4l4 2" stroke="#fff" /></Svg>
        <Svg w={14} h={14} className="ml-[9px]"><path d="M1 13C1 6 6 1.500 13 1.500M4 13c0-5 4-8.500 9-8.500M7 13c0-3 3-5.500 6-5.500" stroke="#dfe3e5" strokeWidth="1.300" /><circle cx="11.500" cy="11.500" r="1.800" fill="#fff" /></Svg>
        <Svg w={15} h={14} className="ml-[8px]"><path d="M.6 4.500H3L6.500 1.500v11L3 9.500H.6zM9.500 5l4 4M13.500 5l-4 4" stroke="#fff" strokeWidth="1.200" /></Svg>
        <div className="w-[64px] ml-[5px] mr-px h-10 flex flex-col items-center text-[11.5px] leading-[18px] pt-[2px]">
          <Label t="11:51 PM" w={47} /><Label t="12/5/2020" w={52} />
        </div>
        <Svg w={18} h={17} className="ml-[11px]"><path d="M0 0h16v12H7l-3 3.500V12H0z" fill="#fff" /><path d="M3 3.500h10M3 6.500h10M3 9.500h6" stroke="#1b2a30" /><circle cx="13" cy="12" r="4.200" fill="#1b2a30" /><path d="M13 8.500c-1 3 .5 4.500 3.500 4-1 3-5.500 3.500-6.500 1-.5-2 .5-4.500 3-5z" fill="#fff" /></Svg>
        <span className="ml-[18px] mr-1 w-px h-10 bg-[#4d5b61]" />
      </div>
    </div>
  );
}

export default function App() {
  return (
    <div className="relative w-[1366px] h-[768px] flex flex-col overflow-hidden bg-white">
      <header className={"h-[23px] shrink-0 flex items-center pl-[2px] pr-[19px] text-[11.5px] text-black " + SEG}>
        <VmwareLogo />
        <span className="ml-[5px]"><Label t="Windows Server 2003 Standard x64 Edition - VMware Workstation" w={343} /></span>
        <span className="ml-auto flex items-center pb-[2px]">
          <Svg w={11} h={11} crisp><path d="M0 5.500h10" stroke="#000" /></Svg>
          <Svg w={11} h={11} crisp className="ml-[35px]"><path d="M.5 2.500h7v7h-7zM2.500 2V.5h7v7H8" stroke="#000" /></Svg>
          <Svg w={11} h={11} className="ml-[35px]"><path d="M.5.5l10 10M10.500.5l-10 10" stroke="#000" strokeWidth="1.100" /></Svg>
        </span>
      </header>
      <MenuBar />
      <main className="flex-1 min-h-0 flex bg-[#d4dbef]">
        <Library />
        <section className="flex-1 min-w-0 flex flex-col border-l-2 border-t border-[#777b80]">
          <Tabs />
          <div className="flex-1 min-h-0 mr-[2px] bg-black pl-[181px] pt-[7px]"><Guest /></div>
          <div className="h-px bg-white shrink-0" />
        </section>
      </main>
      <HostStatus />
      <HostTaskbar />
      <div className="absolute left-[792px] top-[98px]">
        <Svg w={13} h={21}><path d="M.5.5v16l3.700-3.500 2.800 6.500 2.500-1L6.800 12H12z" fill="#fff" stroke="#000" /></Svg>
      </div>
    </div>
  );
}
